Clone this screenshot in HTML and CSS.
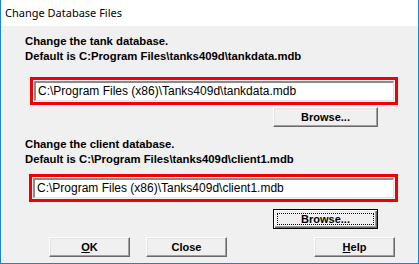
FILE: index.html
```html
<!DOCTYPE html>
<html>
<head>
<meta charset="utf-8">
<link rel="stylesheet" href="styles.css">
</head>
<body>
<div class="window">
  <div class="titlebar">Change Database Files</div>
  <div class="content">
    <div class="section">
      <div class="label">Change the tank database.</div>
      <div class="label">Default is C:Program Files\tanks409d\tankdata.mdb</div>
      <div class="redbox"><div class="field">C:\Program Files (x86)\Tanks409d\tankdata.mdb</div></div>
      <div class="browse-row"><button class="btn browse">Browse...</button></div>
    </div>
    <div class="section second">
      <div class="label">Change the client database.</div>
      <div class="label">Default is C:\Program Files\tanks409d\client1.mdb</div>
      <div class="redbox"><div class="field">C:\Program Files (x86)\Tanks409d\client1.mdb</div></div>
      <div class="browse-row"><button class="btn browse focused"><span class="focus">Browse...</span></button></div>
    </div>
    <div class="actions">
      <button class="btn action"><u>O</u>K</button>
      <button class="btn action">Close</button>
      <span class="spacer"></span>
      <button class="btn action"><u>H</u>elp</button>
    </div>
  </div>
</div>
</body>
</html>
```
FILE: styles.css
```css
html, body {
  margin: 0;
  padding: 0;
  background: #ffffff;
}
.window {
  width: 419px;
  height: 264px;
  box-sizing: border-box;
  border-left: 1px solid #1883d7;
  border-right: 1px solid #1883d7;
  border-bottom: 1px solid #1883d7;
  background: #f0f0f0;
  display: flex;
  flex-direction: column;
  font-family: "Liberation Sans", Arial, sans-serif;
  color: #000;
}
.titlebar {
  height: 26px;
  background: #ffffff;
  font-family: "Noto Sans", sans-serif;
  font-size: 11px;
  line-height: 26px;
  padding-left: 4px;
  box-sizing: border-box;
}
.content {
  padding: 8px 0 0 0;
  display: flex;
  flex-direction: column;
}
.label {
  font-weight: bold;
  font-size: 11.3px;
  line-height: 15px;
  padding-left: 24px;
  white-space: nowrap;
}
.redbox {
  margin: 13px 0 0 29px;
  width: 368px;
  height: 28px;
  box-sizing: border-box;
  border: 3px solid #f00000;
  padding: 1px;
}
.field {
  height: 20px;
  box-sizing: border-box;
  background: #fff;
  border-style: solid;
  border-width: 2px 1px 1px 2px;
  border-color: #8a8a8a #e3e3e3 #e3e3e3 #8a8a8a;
  font-size: 12px;
  line-height: 17px;
  padding-left: 2px;
  white-space: nowrap;
  overflow: hidden;
}
.browse-row {
  display: flex;
  margin-top: 2px;
  padding-left: 272px;
}
.btn {
  font-family: "Liberation Sans", Arial, sans-serif;
  font-weight: bold;
  font-size: 11px;
  color: #000;
  background: #f0f0f0;
  box-sizing: border-box;
  border-style: solid;
  border-width: 1px;
  border-color: #ffffff #696969 #696969 #ffffff;
  box-shadow: inset -1px -1px 0 #a0a0a0, inset 1px 1px 0 #e3e3e3;
  padding: 0;
  margin: 0;
  height: 20px;
  display: flex;
  align-items: center;
  justify-content: center;
}
.browse {
  width: 105px;
}
.browse.focused {
  border-color: #000;
  box-shadow: inset 1px 1px 0 #ffffff, inset -1px -1px 0 #696969, inset -2px -2px 0 #a0a0a0;
  position: relative;
}
.focus {
  position: absolute;
  left: 3px;
  top: 3px;
  right: 3px;
  bottom: 3px;
  border: 1px dotted #000;
  display: flex;
  align-items: center;
  justify-content: center;
}
.second {
  margin-top: 10px;
}
.second .redbox {
  margin-top: 7px;
  margin-left: 28px;
  width: 369px;
}
.second .browse-row {
  margin-top: 7px;
}
.actions {
  display: flex;
  margin-top: 8px;
  padding-left: 48px;
  gap: 16px;
}
.action {
  width: 81px;
}
.spacer {
  width: 55px;
}
```
